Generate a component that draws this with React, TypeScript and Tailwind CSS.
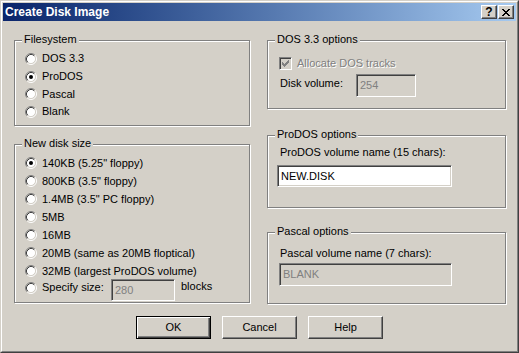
import React from "react";

const FONT = "font-['Liberation_Sans',Arial,sans-serif]";

function Radio({ checked }: { checked?: boolean }) {
  return (
    <svg width="12" height="12" viewBox="0 0 12 12" className="shrink-0">
      <circle cx="6" cy="6" r="4.5" fill="#ffffff" />
      <path d="M2.11 9.89A5.5 5.5 0 0 1 9.89 2.11" stroke="#808080" fill="none" />
      <path d="M9.89 2.11A5.5 5.5 0 0 1 2.11 9.89" stroke="#ffffff" fill="none" />
      <path d="M2.82 9.18A4.5 4.5 0 0 1 9.18 2.82" stroke="#404040" fill="none" />
      <path d="M9.18 2.82A4.5 4.5 0 0 1 2.82 9.18" stroke="#d4d0c8" fill="none" />
      {checked && <circle cx="6" cy="6" r="2" fill="#000000" />}
    </svg>
  );
}

function RadioRow({
  label,
  checked,
  rowClass = "h-[18px]",
}: {
  label: string;
  checked?: boolean;
  rowClass?: string;
}) {
  return (
    <div className={`flex items-center gap-[5px] ${rowClass}`}>
      <Radio checked={checked} />
      <span className="leading-[13px]">{label}</span>
    </div>
  );
}

function GroupBox({
  title,
  className,
  children,
}: {
  title: string;
  className: string;
  children?: React.ReactNode;
}) {
  return (
    <div
      className={`relative border border-[#808080] shadow-[inset_1px_1px_0_#ffffff,1px_1px_0_#ffffff] ${className}`}
    >
      <span className="absolute left-[7px] top-[-8px] bg-[#d4d0c8] px-[2px] leading-[13px]">
        {title}
      </span>
      {children}
    </div>
  );
}

function Field({
  value,
  disabled,
  className,
}: {
  value: string;
  disabled?: boolean;
  className: string;
}) {
  return (
    <div
      className={`flex items-center border border-t-[#808080] border-l-[#808080] border-r-white border-b-white shadow-[inset_1px_1px_0_#404040,inset_-1px_-1px_0_#d4d0c8] pl-[3px] leading-[13px] ${
        disabled ? "bg-[#d4d0c8] text-[#808080]" : "bg-white text-black"
      } ${className}`}
    >
      {value}
    </div>
  );
}

function Button({ label, isDefault }: { label: string; isDefault?: boolean }) {
  return (
    <div
      className={`flex h-[23px] w-[75px] items-center justify-center leading-[13px] ${
        isDefault
          ? "border border-black shadow-[inset_1px_1px_0_#ffffff,inset_-1px_-1px_0_#404040,inset_-2px_-2px_0_#808080]"
          : "border border-t-white border-l-white border-r-[#404040] border-b-[#404040] shadow-[inset_-1px_-1px_0_#808080]"
      }`}
    >
      {label}
    </div>
  );
}

function CaptionButton({ children }: { children: React.ReactNode }) {
  return (
    <div className="flex h-[14px] w-[16px] items-center justify-center border border-t-white border-l-white border-r-[#404040] border-b-[#404040] bg-[#d4d0c8] shadow-[inset_-1px_-1px_0_#808080]">
      {children}
    </div>
  );
}

export default function App() {
  return (
    <div
      className={`h-[353px] w-[519px] border border-t-[#d4d0c8] border-l-[#d4d0c8] border-r-[#404040] border-b-[#404040] bg-[#d4d0c8] text-[11px] text-black ${FONT}`}
    >
      <div className="h-full w-full border border-t-white border-l-white border-r-[#808080] border-b-[#808080]">
        <div className="flex h-full w-full flex-col border border-[#d4d0c8]">
          {/* caption */}
          <div className="flex h-[18px] shrink-0 items-center bg-gradient-to-r from-[#0a246a] to-[#a6caf0] pl-[2px] pr-[2px]">
            <span className="flex-1 text-[12px] font-bold leading-[14px] text-white">
              Create Disk Image
            </span>
            <CaptionButton>
              <span className="text-[12px] font-bold leading-[12px] text-black">?</span>
            </CaptionButton>
            <div className="w-[1px]" />
            <CaptionButton>
              <svg width="8" height="7" viewBox="0 0 8 7" shapeRendering="crispEdges">
                <path
                  d="M0 0h2v1h-2zM6 0h2v1h-2zM1 1h2v1h-2zM5 1h2v1h-2zM2 2h4v1h-4zM3 3h2v1h-2zM2 4h4v1h-4zM1 5h2v1h-2zM5 5h2v1h-2zM0 6h2v1h-2zM6 6h2v1h-2z"
                  fill="#000000"
                />
              </svg>
            </CaptionButton>
          </div>

          {/* client */}
          <div className="flex flex-1 flex-col pl-[11px] pt-[19px]">
            <div className="flex items-start gap-[17px]">
              {/* left column */}
              <div className="flex w-[236px] flex-col">
                <GroupBox title="Filesystem" className="h-[86px] pl-[10px] pt-[9px]">
                  <RadioRow label="DOS 3.3" rowClass="h-[17.7px]" />
                  <RadioRow label="ProDOS" checked rowClass="h-[17.7px]" />
                  <RadioRow label="Pascal" rowClass="h-[17.7px]" />
                  <RadioRow label="Blank" rowClass="h-[17.7px]" />
                </GroupBox>
                <GroupBox title="New disk size" className="mt-[18px] h-[159px] pl-[10px] pt-[9px]">
                  <RadioRow label={'140KB (5.25" floppy)'} checked />
                  <RadioRow label={'800KB (3.5" floppy)'} />
                  <RadioRow label={'1.4MB (3.5" PC floppy)'} />
                  <RadioRow label="5MB" />
                  <RadioRow label="16MB" />
                  <RadioRow label="20MB (same as 20MB floptical)" />
                  <RadioRow label="32MB (largest ProDOS volume)" />
                  <div className="flex items-start">
                    <div className="flex h-[15px] items-center gap-[5px]">
                      <Radio />
                      <span className="w-[69px] leading-[13px]">Specify size:</span>
                    </div>
                    <Field value="280" disabled className="mt-[-1px] h-[22px] w-[64px]" />
                    <span className="ml-[6px] leading-[13px]">blocks</span>
                  </div>
                </GroupBox>
              </div>

              {/* right column */}
              <div className="flex w-[239px] flex-col">
                <GroupBox title="DOS 3.3 options" className="h-[69px] pl-[11px] pt-[16px]">
                  <div className="flex h-[13px] items-center gap-[5px]">
                    <div className="flex h-[13px] w-[13px] items-center justify-center border border-t-[#808080] border-l-[#808080] border-r-white border-b-white bg-[#d4d0c8] shadow-[inset_1px_1px_0_#404040,inset_-1px_-1px_0_#d4d0c8]">
                      <svg width="7" height="7" viewBox="0 0 7 7" shapeRendering="crispEdges">
                        <path
                          d="M6 0h1v3h-1zM5 1h1v3h-1zM4 2h1v3h-1zM3 3h1v3h-1zM2 4h1v3h-1zM1 3h1v3h-1zM0 2h1v3h-1z"
                          fill="#808080"
                        />
                      </svg>
                    </div>
                    <span className="leading-[13px] text-[#808080] [text-shadow:1px_1px_0_#ffffff]">
                      Allocate DOS tracks
                    </span>
                  </div>
                  <div className="mt-[4px] flex items-start">
                    <span className="ml-[1px] mt-[3px] w-[76px] leading-[13px]">Disk volume:</span>
                    <Field value="254" disabled className="h-[23px] w-[60px]" />
                  </div>
                </GroupBox>

                <GroupBox title="ProDOS options" className="mt-[26px] h-[73px] pl-[11px] pt-[10px]">
                  <div className="ml-[1px] leading-[13px]">ProDOS volume name (15 chars):</div>
                  <Field value="NEW.DISK" className="ml-[-2px] mt-[6px] h-[22px] w-[175px]" />
                </GroupBox>

                <GroupBox title="Pascal options" className="mt-[24px] h-[72px] pl-[11px] pt-[14px]">
                  <div className="ml-[1px] leading-[13px]">Pascal volume name (7 chars):</div>
                  <Field value="BLANK" disabled className="mt-[3px] h-[23px] w-[173px]" />
                </GroupBox>
              </div>
            </div>

            {/* buttons */}
            <div className="mt-[12px] flex justify-center gap-[11px] pr-[11px]">
              <Button label="OK" isDefault />
              <Button label="Cancel" />
              <Button label="Help" />
            </div>
          </div>
        </div>
      </div>
    </div>
  );
}
